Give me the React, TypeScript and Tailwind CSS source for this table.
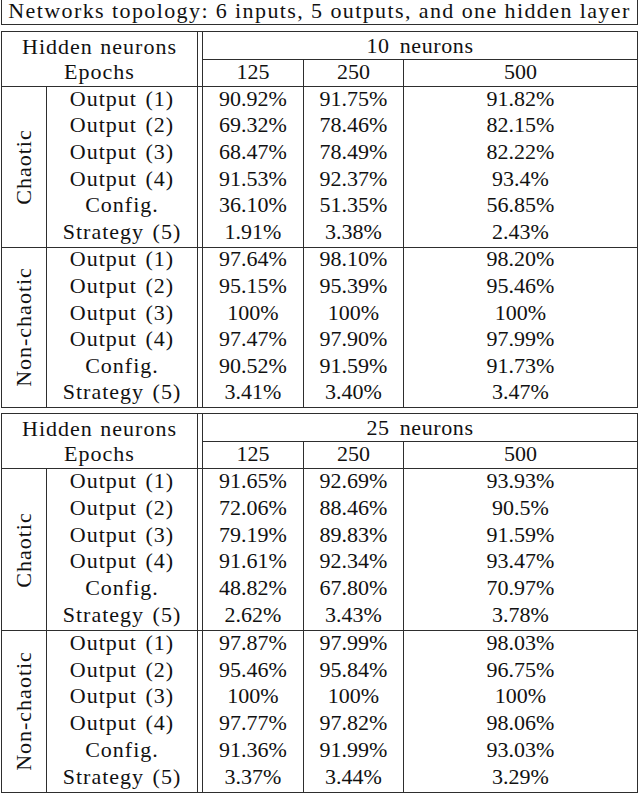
import React from "react";

type Row = [string, string, string, string];

const T1C: Row[] = [
  ["Output (1)", "90.92%", "91.75%", "91.82%"],
  ["Output (2)", "69.32%", "78.46%", "82.15%"],
  ["Output (3)", "68.47%", "78.49%", "82.22%"],
  ["Output (4)", "91.53%", "92.37%", "93.4%"],
  ["Config.", "36.10%", "51.35%", "56.85%"],
  ["Strategy (5)", "1.91%", "3.38%", "2.43%"],
];
const T1N: Row[] = [
  ["Output (1)", "97.64%", "98.10%", "98.20%"],
  ["Output (2)", "95.15%", "95.39%", "95.46%"],
  ["Output (3)", "100%", "100%", "100%"],
  ["Output (4)", "97.47%", "97.90%", "97.99%"],
  ["Config.", "90.52%", "91.59%", "91.73%"],
  ["Strategy (5)", "3.41%", "3.40%", "3.47%"],
];
const T2C: Row[] = [
  ["Output (1)", "91.65%", "92.69%", "93.93%"],
  ["Output (2)", "72.06%", "88.46%", "90.5%"],
  ["Output (3)", "79.19%", "89.83%", "91.59%"],
  ["Output (4)", "91.61%", "92.34%", "93.47%"],
  ["Config.", "48.82%", "67.80%", "70.97%"],
  ["Strategy (5)", "2.62%", "3.43%", "3.78%"],
];
const T2N: Row[] = [
  ["Output (1)", "97.87%", "97.99%", "98.03%"],
  ["Output (2)", "95.46%", "95.84%", "96.75%"],
  ["Output (3)", "100%", "100%", "100%"],
  ["Output (4)", "97.77%", "97.82%", "98.06%"],
  ["Config.", "91.36%", "91.99%", "93.03%"],
  ["Strategy (5)", "3.37%", "3.44%", "3.29%"],
];

function Cell({ children, tall, className = "" }: { children: React.ReactNode; tall?: boolean; className?: string }) {
  return (
    <div
      className={
        "flex items-center justify-center pb-[3px] leading-none whitespace-nowrap " +
        (tall ? "h-[26.8px] " : "h-[26.6px] ") +
        className
      }
    >
      {children}
    </div>
  );
}

function Group({ label, rows, last, tall }: { label: string; rows: Row[]; last?: boolean; tall?: boolean }) {
  return (
    <div className={"flex " + (last ? "" : "border-b border-[#2e2e2e]")}>
      <div className="w-[196px] flex border-r border-[#2e2e2e]">
        <div className="w-[45px] border-r border-[#2e2e2e] flex items-center justify-center">
          <span className="-rotate-90 whitespace-nowrap leading-none inline-block tracking-[1px]">{label}</span>
        </div>
        <div className="flex-1 flex flex-col">
          {rows.map((r, i) => (
            <Cell key={i} tall={tall} className="tracking-[1px] [word-spacing:2px]">
              {r[0]}
            </Cell>
          ))}
        </div>
      </div>
      <div className="w-[4px]" />
      <div className="flex-1 flex border-l border-[#2e2e2e]">
        <div className="w-[101px] border-r border-[#2e2e2e] flex flex-col">
          {rows.map((r, i) => (
            <Cell key={i} tall={tall}>{r[1]}</Cell>
          ))}
        </div>
        <div className="w-[100px] border-r border-[#2e2e2e] flex flex-col">
          {rows.map((r, i) => (
            <Cell key={i} tall={tall}>{r[2]}</Cell>
          ))}
        </div>
        <div className="flex-1 flex flex-col">
          {rows.map((r, i) => (
            <Cell key={i} tall={tall}>{r[3]}</Cell>
          ))}
        </div>
      </div>
    </div>
  );
}

function Table({ neurons, chaotic, non, tall }: { neurons: string; chaotic: Row[]; non: Row[]; tall?: boolean }) {
  return (
    <div className="ml-[1px] w-[637px] border border-[#2e2e2e]">
      <div className="flex border-b border-[#2e2e2e]">
        <div className="w-[196px] border-r border-[#2e2e2e] flex flex-col">
          <div className="h-[28px] flex items-center justify-center pt-[1px] leading-none tracking-[1px] [word-spacing:1px]">
            Hidden neurons
          </div>
          <div className="h-[26px] flex items-center justify-center pb-[3px] leading-none tracking-[1px]">Epochs</div>
        </div>
        <div className="w-[4px]" />
        <div className="flex-1 flex flex-col border-l border-[#2e2e2e]">
          <div className="h-[28px] border-b border-[#2e2e2e] flex items-center justify-center pt-[1px] leading-none tracking-[0.6px] [word-spacing:4px]">
            {neurons}
          </div>
          <div className="h-[26px] flex">
            <div className="w-[101px] border-r border-[#2e2e2e] flex items-center justify-center pb-[3px] leading-none">125</div>
            <div className="w-[100px] border-r border-[#2e2e2e] flex items-center justify-center pb-[3px] leading-none">250</div>
            <div className="flex-1 flex items-center justify-center pb-[3px] leading-none">500</div>
          </div>
        </div>
      </div>
      <Group label="Chaotic" rows={chaotic} tall={tall} />
      <Group label="Non-chaotic" rows={non} last tall={tall} />
    </div>
  );
}

export default function App() {
  return (
    <div className="w-[640px] h-[793px] bg-white text-[#111111] text-[22px] overflow-hidden font-['Liberation_Serif','Times_New_Roman',serif]">
      <div className="ml-[1px] w-[637px] h-[25px] border-x border-b border-[#2e2e2e] flex items-center justify-center pb-[2px] leading-none whitespace-nowrap tracking-[1.4px]">
        Networks topology: 6 inputs, 5 outputs, and one hidden layer
      </div>
      <div className="h-[6px]" />
      <Table neurons="10 neurons" chaotic={T1C} non={T1N} />
      <div className="h-[5px]" />
      <Table neurons="25 neurons" chaotic={T2C} non={T2N} tall />
    </div>
  );
}
